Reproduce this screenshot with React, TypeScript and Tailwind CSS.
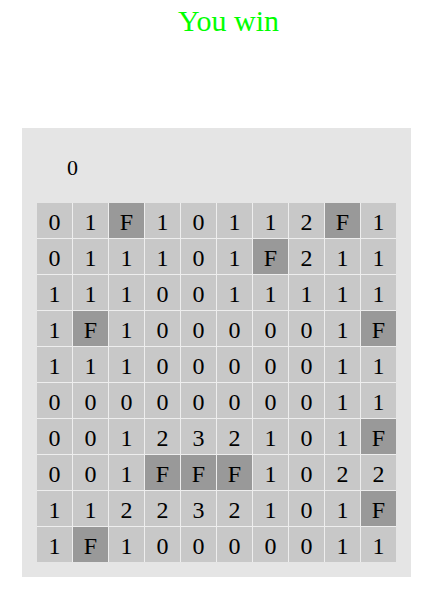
import React from "react";

const board: string[][] = [
  ["0", "1", "F", "1", "0", "1", "1", "2", "F", "1"],
  ["0", "1", "1", "1", "0", "1", "F", "2", "1", "1"],
  ["1", "1", "1", "0", "0", "1", "1", "1", "1", "1"],
  ["1", "F", "1", "0", "0", "0", "0", "0", "1", "F"],
  ["1", "1", "1", "0", "0", "0", "0", "0", "1", "1"],
  ["0", "0", "0", "0", "0", "0", "0", "0", "1", "1"],
  ["0", "0", "1", "2", "3", "2", "1", "0", "1", "F"],
  ["0", "0", "1", "F", "F", "F", "1", "0", "2", "2"],
  ["1", "1", "2", "2", "3", "2", "1", "0", "1", "F"],
  ["1", "F", "1", "0", "0", "0", "0", "0", "1", "1"],
];

export default function App() {
  return (
    <div className="min-h-[589px] bg-white text-black font-['Liberation_Serif',serif]">
      <div className="pt-[3px] pl-[20px] text-center text-[30px] leading-[36px] text-[#00ff00]">
        You win
      </div>
      <div className="mt-[89px] ml-[22px] w-[389px] bg-[#e5e5e5] p-[15px]">
        <div className="h-[60px] pl-[30px] pt-[12px] text-[22px] leading-[26px]">0</div>
        <div className="grid w-[359px] grid-cols-10 gap-px bg-[#eeeeee]">
          {board.flat().map((v, i) => (
            <div
              key={i}
              className={
                v === "F"
                  ? "flex h-[35px] items-center justify-center bg-[#999999] pt-[3px] text-[24px] leading-[28px]"
                  : "flex h-[35px] items-center justify-center bg-[#c8c8c8] pt-[3px] text-[24px] leading-[28px]"
              }
            >
              {v}
            </div>
          ))}
        </div>
      </div>
    </div>
  );
}
